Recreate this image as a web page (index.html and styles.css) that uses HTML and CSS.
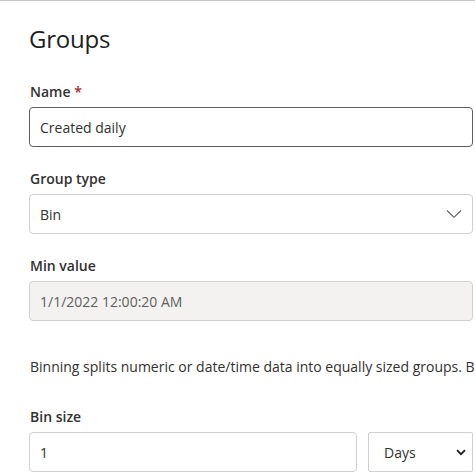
FILE: index.html
```html
<!DOCTYPE html>
<html>
<head>
  <meta charset="utf-8">
  <link rel="stylesheet" href="styles.css">
</head>
<body>
  <div class="panel">
    <h2 class="panel-title">Groups</h2>

    <div class="field first">
      <label class="field-label" for="groupName">Name <span class="required">*</span></label>
      <input class="text-input" id="groupName" type="text" value="Created daily">
    </div>

    <div class="field">
      <label class="field-label">Group type</label>
      <div class="dropdown">
        <span class="dropdown-value">Bin</span>
        <svg class="dropdown-caret" width="16" height="8" viewBox="0 0 16 8">
          <path d="M1 0.5 L8 7.3 L15 0.5" fill="none" stroke="#605e5c" stroke-width="1.1"/>
        </svg>
      </div>
    </div>

    <div class="field">
      <label class="field-label" for="minValue">Min value</label>
      <input class="text-input disabled" id="minValue" type="text" value="1/1/2022 12:00:20 AM" disabled>
    </div>

    <p class="description">Binning splits numeric or date/time data into equally sized groups. Bin size determines the interval.</p>

    <div class="field bin-field">
      <label class="field-label" for="binSize">Bin size</label>
      <div class="bin-row">
        <input class="text-input bin-size" id="binSize" type="text" value="1">
        <div class="unit-select">
          <span>Days</span>
          <svg width="10" height="7" viewBox="0 0 10 7">
            <path d="M1 1.2 L5 5.2 L9 1.2" fill="none" stroke="#201f1e" stroke-width="1.8"/>
          </svg>
        </div>
      </div>
    </div>
  </div>
</body>
</html>
```

FILE: styles.css
```css
html, body {
  margin: 0;
  padding: 0;
  overflow: hidden;
}
body {
  background: #fff;
  color: #323130;
  font-family: "Open Sans", "Noto Sans", Arial, sans-serif;
  font-size: 14px;
  border-top: 1px solid #c8c6c4;
}
.panel {
  width: 444px;
  padding: 0 0 0 29px;
}
.panel-title {
  margin: 0;
  padding-top: 22px;
  font-size: 24px;
  font-weight: 400;
  line-height: 32px;
  letter-spacing: -0.2px;
  color: #201f1e;
}
.field {
  margin-top: 17px;
}
.field.first {
  margin-top: 22px;
}
.field.bin-field {
  margin-top: 25px;
}
.field-label {
  display: block;
  padding: 5px 0 5px 1px;
  line-height: 20px;
  font-weight: 600;
}
.required {
  color: #a4262c;
}
.text-input {
  box-sizing: border-box;
  display: block;
  width: 100%;
  height: 40px;
  margin: 0;
  padding: 0 10px;
  border: 1px solid #605e5c;
  border-radius: 4px;
  background: #fff;
  color: #323130;
  font-family: inherit;
  font-size: 14px;
  outline: none;
}
.text-input.disabled {
  background: #f3f2f1;
  border-color: #d2d0ce;
  color: #605e5c;
}
.dropdown {
  box-sizing: border-box;
  height: 40px;
  display: flex;
  align-items: center;
  justify-content: space-between;
  padding: 0 10px;
  border: 1px solid #d2d0ce;
  border-radius: 4px;
}
.description {
  margin: 36px 0 0 1px;
  line-height: 20px;
  white-space: nowrap;
}
.bin-row {
  display: flex;
  gap: 11px;
}
.bin-size {
  width: 328px;
  border-color: #d2d0ce;
}
.unit-select {
  box-sizing: border-box;
  flex: 1;
  height: 40px;
  display: flex;
  align-items: center;
  justify-content: space-between;
  padding: 0 6px 0 15px;
  border: 1px solid #d2d0ce;
  border-radius: 2px;
}
```
